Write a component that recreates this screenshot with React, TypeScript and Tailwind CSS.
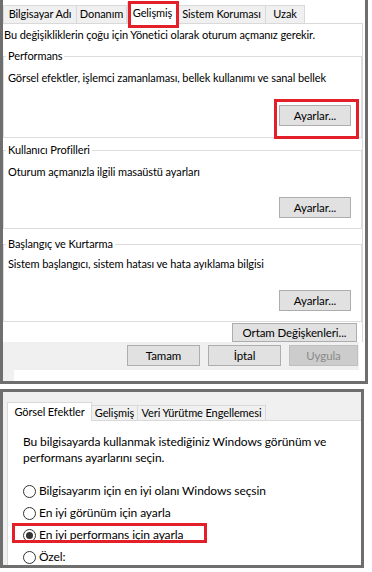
import React from "react";

const TOP_TABS: { label: string; w: string; active?: boolean }[] = [
  { label: "Bilgisayar Adı", w: "w-[74px]" },
  { label: "Donanım", w: "w-[51px]" },
  { label: "Gelişmiş", w: "w-[51px]", active: true },
  { label: "Sistem Koruması", w: "w-[89px]" },
  { label: "Uzak", w: "w-[40px]" },
];

const PERF_TABS: { label: string; w: string; active?: boolean }[] = [
  { label: "Görsel Efektler", w: "w-[85px]", active: true },
  { label: "Gelişmiş", w: "w-[47px]" },
  { label: "Veri Yürütme Engellemesi", w: "w-[129px]" },
];

const RADIOS = [
  { label: "Bilgisayarım için en iyi olanı Windows seçsin", checked: false },
  { label: "En iyi görünüm için ayarla", checked: false },
  { label: "En iyi performans için ayarla", checked: true, marked: true },
  { label: "Özel:", checked: false },
];

function WinButton({
  children,
  className = "",
  disabled = false,
}: {
  children: React.ReactNode;
  className?: string;
  disabled?: boolean;
}) {
  return (
    <button
      type="button"
      className={`flex items-center justify-center border text-[11.5px] leading-none whitespace-nowrap ${
        disabled
          ? "bg-[#cccccc] border-[#bfbfbf] text-[#8a8a8a]"
          : "bg-[#e1e1e1] border-[#adadad] text-black"
      } ${className}`}
    >
      {children}
    </button>
  );
}

function Group({
  title,
  desc,
  className = "",
  descGap,
  btnGap,
  marked = false,
}: {
  title: string;
  desc: string;
  className?: string;
  descGap: string;
  btnGap: string;
  marked?: boolean;
}) {
  return (
    <fieldset className={`border border-[#dcdcdc] ${className}`}>
      <legend className="ml-[2px] px-[2px] leading-[14px] whitespace-nowrap">{title}</legend>
      <div className={`pl-[4px] leading-[14px] whitespace-nowrap ${descGap}`}>{desc}</div>
      <div className={`flex justify-end pr-[10px] ${btnGap}`}>
        <div className="relative">
          <WinButton className="w-[72px] h-[21px]">Ayarlar...</WinButton>
          {marked && (
            <div className="absolute -left-[5px] -top-[6px] w-[85px] h-[40px] border-[3px] border-[#e3202a] pointer-events-none" />
          )}
        </div>
      </div>
    </fieldset>
  );
}

function SystemProperties() {
  return (
    <div className="w-[368px] h-[384px] border-x-[3px] border-b-[3px] border-[#6e6e6e] bg-white overflow-hidden">
      {/* tab strip */}
      <div className="relative h-[23px] flex items-end whitespace-nowrap">
        {TOP_TABS.map((t) =>
          t.active ? (
            <div
              key={t.label}
              className={`${t.w} h-[22px] -mb-px z-10 bg-white border border-b-0 border-[#d9d9d9] flex items-center justify-center`}
            >
              {t.label}
            </div>
          ) : (
            <div
              key={t.label}
              className={`${t.w} h-[18px] -ml-px first:ml-0 bg-[#f0f0f0] border border-b-0 border-[#d9d9d9] flex items-center justify-center`}
            >
              {t.label}
            </div>
          )
        )}
        <div className="absolute left-[125px] top-[1px] w-[51px] h-[27px] border-[3px] border-[#e3202a] z-20 pointer-events-none" />
      </div>

      {/* page */}
      <div className="w-[360px] bg-white border-t border-r border-[#d9d9d9] flex flex-col">
        <div className="pt-[4px] pl-[1px] leading-[14px] whitespace-nowrap">
          Bu değişikliklerin çoğu için Yönetici olarak oturum açmanız gerekir.
        </div>
        <Group
          title="Performans"
          desc="Görsel efektler, işlemci zamanlaması, bellek kullanımı ve sanal bellek"
          className="mt-[7px] pb-[11px]"
          descGap="mt-[8px]"
          btnGap="mt-[20px]"
          marked
        />
        <Group
          title="Kullanıcı Profilleri"
          desc="Oturum açmanızla ilgili masaüstü ayarları"
          className="mt-[5px] pb-[10px]"
          descGap="mt-[8px]"
          btnGap="mt-[18px]"
        />
        <Group
          title="Başlangıç ve Kurtarma"
          desc="Sistem başlangıcı, sistem hatası ve hata ayıklama bilgisi"
          className="mt-[8px] pb-[10px]"
          descGap="mt-[6px]"
          btnGap="mt-[19px]"
        />
        <div className="flex justify-end pr-[5px] mt-[1px]">
          <WinButton className="w-[125px] h-[19px]">Ortam Değişkenleri...</WinButton>
        </div>
      </div>

      {/* bottom button band */}
      <div className="w-[356px] bg-[#f0f0f0] flex flex-col">
        <div className="flex justify-end gap-[8px] pt-[3px] pr-[1px]">
          <WinButton className="w-[73px] h-[21px]">Tamam</WinButton>
          <WinButton className="w-[73px] h-[21px]">İptal</WinButton>
          <WinButton className="w-[69px] h-[21px]" disabled>
            Uygula
          </WinButton>
        </div>
        <div className="h-[11px] mt-[4px] ml-[11px] bg-white" />
      </div>
    </div>
  );
}

function Radio({ checked }: { checked: boolean }) {
  return (
    <span className="w-[13px] h-[13px] rounded-full border border-[#333333] bg-white flex items-center justify-center shrink-0">
      {checked && <span className="w-[7px] h-[7px] rounded-full bg-[#333333]" />}
    </span>
  );
}

function PerformanceOptions() {
  return (
    <div className="w-[364px] h-[179px] border-[3px] border-[#6e6e6e] bg-[#f0f0f0] overflow-hidden flex flex-col">
      <div className="h-[28px] shrink-0 flex items-end pl-[4px] whitespace-nowrap">
        {PERF_TABS.map((t) =>
          t.active ? (
            <div
              key={t.label}
              className={`${t.w} h-[19px] -mb-px z-10 bg-white border border-b-0 border-[#d9d9d9] flex items-center justify-center`}
            >
              {t.label}
            </div>
          ) : (
            <div
              key={t.label}
              className={`${t.w} h-[15px] -ml-px bg-[#f0f0f0] border border-b-0 border-[#d9d9d9] flex items-center justify-center`}
            >
              {t.label}
            </div>
          )
        )}
      </div>
      <div className="ml-[4px] flex-1 bg-white border-t border-l border-[#d9d9d9] pt-[13px] pl-[15px] text-[12px] whitespace-nowrap">
        <div className="leading-[16px]">
          Bu bilgisayarda kullanmak istediğiniz Windows görünüm ve
          <br />
          performans ayarlarını seçin.
        </div>
        <div className="mt-[14px] flex flex-col">
          {RADIOS.map((r) => (
            <div key={r.label} className="relative h-[22px] flex items-center gap-[3px]">
              <Radio checked={r.checked} />
              <span className="leading-[22px]">{r.label}</span>
              {r.marked && (
                <div className="absolute -left-[11px] -top-[1px] w-[195px] h-[20px] border-[3px] border-[#e3202a] pointer-events-none" />
              )}
            </div>
          ))}
        </div>
      </div>
    </div>
  );
}

export default function App() {
  return (
    <div className="w-[372px] h-[572px] bg-white text-black text-[11px] tracking-[-0.1px] font-['Lato',sans-serif] overflow-hidden">
      <SystemProperties />
      <div className="mt-[5px]">
        <PerformanceOptions />
      </div>
    </div>
  );
}
